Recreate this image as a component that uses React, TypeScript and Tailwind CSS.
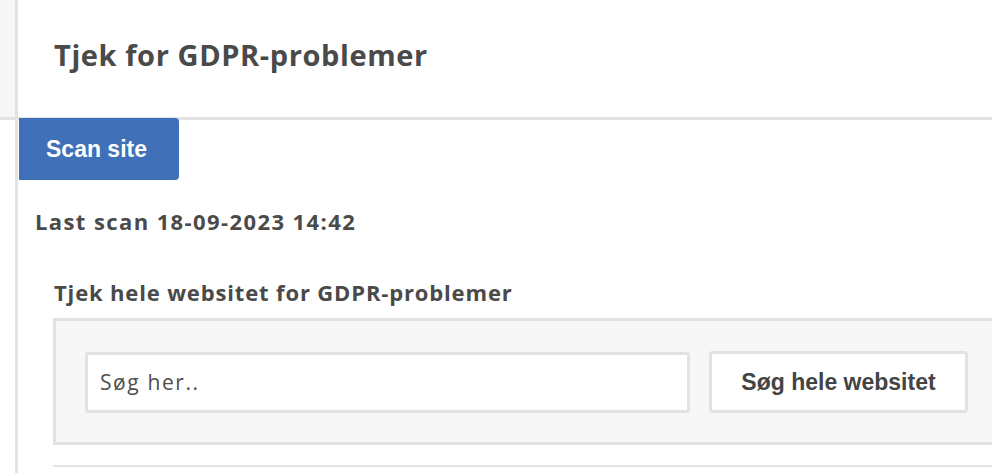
import React, { useState } from 'react';

const App: React.FC = () => {
  const [query, setQuery] = useState('');

  return (
    <div className="flex h-[473px] w-[992px] overflow-hidden bg-white" style={{ fontFamily: '"Open Sans", "Liberation Sans", sans-serif' }}>
      <div className="flex w-[15px] shrink-0 flex-col">
        <div className="h-[117px] bg-[#f6f6f6]" />
        <div className="h-[3px] bg-[#e2e2e2]" />
      </div>
      <div className="w-[3px] shrink-0 bg-[#e2e2e2]" />

      <div className="flex min-w-0 flex-1 flex-col">
        <div className="flex h-[117px] shrink-0 flex-col pl-[36px] pt-[37px]">
          <h1 className="text-[29px] font-bold leading-[36px] tracking-[0.6px] text-[#4a4a4a]">Tjek for GDPR-problemer</h1>
        </div>
        <div className="h-[3px] shrink-0 bg-[#e2e2e2]" />

        <div className="flex flex-col">
          <button className="relative -mt-[2px] ml-[1px] flex h-[62px] w-[160px] items-center rounded-r-[4px] bg-[#3f70b8] pl-[27px] text-[23px] font-bold text-white" style={{ fontFamily: '"Liberation Sans", Arial, sans-serif' }}>
            Scan site
          </button>

          <p className="mt-[27px] pl-[17px] text-[22px] font-bold leading-[28px] tracking-[1.4px] text-[#4a4a4a]">Last scan 18-09-2023 14:42</p>

          <div className="mt-[43px] pl-[35px]">
            <h2 className="pl-[1px] text-[22px] font-bold leading-[28px] tracking-[0.85px] text-[#4a4a4a]">Tjek hele websitet for GDPR-problemer</h2>
            <div className="mt-[12px] flex items-center gap-[19px] border-[3px] border-r-0 border-[#e2e2e2] bg-[#f7f7f7] pb-[29px] pl-[29px] pt-[30px]">
              <input
                value={query}
                onChange={(e) => setQuery(e.target.value)}
                placeholder="Søg her.."
                className="h-[61px] w-[605px] rounded-[3px] border-[3px] border-[#e2e2e2] bg-white pl-[12px] text-[21px] tracking-[1.6px] text-[#4f4f4f] outline-none placeholder:text-[#4f4f4f]"
              />
              <button className="h-[62px] w-[259px] rounded-[4px] border-[3px] border-[#e2e2e2] bg-white text-[23px] font-bold text-[#444]" style={{ fontFamily: '"Liberation Sans", Arial, sans-serif' }}>
                Søg hele websitet
              </button>
            </div>
            <div className="mt-[20px] h-[2px] bg-[#e2e2e2]" />
          </div>
        </div>
      </div>
    </div>
  );
};

export default App;
